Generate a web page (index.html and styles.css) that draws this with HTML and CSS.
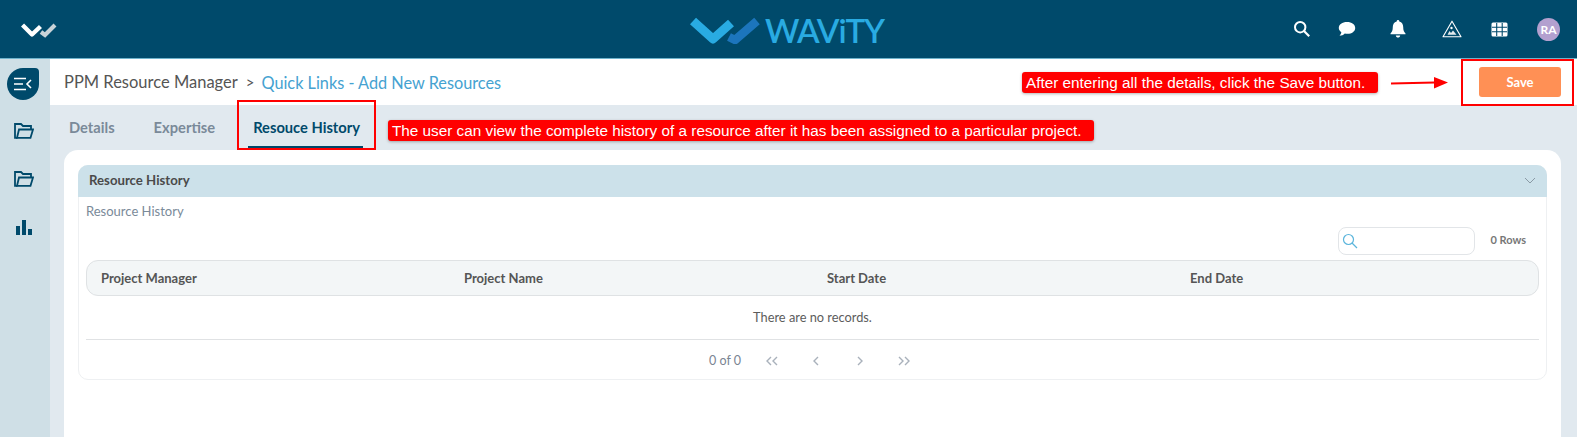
FILE: index.html
```html
<!DOCTYPE html>
<html lang="en">

<head>
  <meta charset="UTF-8">
  <meta name="viewport" content="width=device-width, initial-scale=1.0">
  <title>PPM Resource Manager</title>
  <link rel="stylesheet" href="styles.css">
</head>

<body>
  <div class="topbar">
    <svg class="mini-logo" width="36" height="16" viewBox="0 0 36 16">
      <path d="M1.5 3 L11 12.5 L19.5 4.5" fill="none" stroke="#fff" stroke-width="4.4" stroke-linejoin="round" />
      <path d="M20 10 L24 13 L34 3" fill="none" stroke="#c9d3d8" stroke-width="4.2" />
    </svg>
    <div class="brand">
      <svg width="70" height="28" viewBox="0 0 70 28">
        <path d="M3 5 L23 23 L41 7" fill="none" stroke="#29abe2" stroke-width="9" stroke-linejoin="round" />
        <path d="M39 21 L45 24 L67 5" fill="none" stroke="#1c75bc" stroke-width="8.5" stroke-linejoin="round" />
      </svg>
      <span class="brand-name">WAViTY</span>
    </div>
    <div class="top-icons">
      <svg class="ic-search" width="18" height="18" viewBox="0 0 18 18">
        <circle cx="7.2" cy="7.2" r="5.2" fill="none" stroke="#fff" stroke-width="2" />
        <path d="M11 11 L16.2 16.2" stroke="#fff" stroke-width="2.2" />
      </svg>
      <svg class="ic-comment" width="18" height="16" viewBox="0 0 18 16">
        <path d="M9 1 C13.8 1 17.2 3.5 17.2 7 C17.2 10.5 13.8 12.8 9.5 12.8 C8.5 12.8 7.6 12.7 6.8 12.5 C5.5 13.8 3.5 14.8 1.5 14.8 C2.5 13.8 3.2 12.4 3.3 11.2 C1.7 10 .8 8.6 .8 7 C.8 3.5 4.2 1 9 1 Z" fill="#fff" />
      </svg>
      <svg class="ic-bell" width="16" height="18" viewBox="0 0 16 18">
        <path d="M8 0 C8.8 0 9.3 .6 9.3 1.4 C12 2 13.2 4.2 13.2 7 C13.2 10.5 14 12 15.5 13.4 L15.5 14.2 L.5 14.2 L.5 13.4 C2 12 2.8 10.5 2.8 7 C2.8 4.2 4 2 6.7 1.4 C6.7 .6 7.2 0 8 0 Z" fill="#fff" />
        <path d="M5.8 15.4 L10.2 15.4 C10 16.8 9.1 17.6 8 17.6 C6.9 17.6 6 16.8 5.8 15.4 Z" fill="#fff" />
      </svg>
      <svg class="ic-warn" width="20" height="18" viewBox="0 0 20 18">
        <path d="M10 1.2 L19 16.8 L1 16.8 Z" fill="none" stroke="#fff" stroke-width="1.1" stroke-linejoin="round" />
        <path d="M5.5 14.8 L7.5 11 L9 13 L11 10.5 L14.5 14.8 Z" fill="#e4ebee" />
        <circle cx="9.5" cy="8" r="1.2" fill="#fff" />
      </svg>
      <svg class="ic-grid" width="17" height="15" viewBox="0 0 17 15">
        <rect x=".5" y=".5" width="16" height="14" rx="1.5" fill="#fff" />
        <path d="M5.7 1 V14 M11.2 1 V14 M1 5.2 H16 M1 9.8 H16" stroke="#004a6b" stroke-width="1.1" />
      </svg>
      <span class="avatar">RA</span>
    </div>
  </div>

  <div class="layout">
    <div class="sidebar">
      <div class="toggle">
        <svg width="18" height="14" viewBox="0 0 18 14">
          <path d="M0 1.5 H12 M0 7 H9 M0 12.5 H12" stroke="#fff" stroke-width="1.6" />
          <path d="M17 3 L13 7 L17 11" fill="none" stroke="#fff" stroke-width="1.6" />
        </svg>
      </div>
      <svg class="side-ic" width="20" height="16" viewBox="0 0 20 16">
        <path d="M3.5 14.8 H1 V1 H7 L9 3 H17 V6" fill="none" stroke="#004a6b" stroke-width="1.8" />
        <path d="M5 6.5 H19 L16.5 14.8 H3 Z" fill="none" stroke="#004a6b" stroke-width="1.8" />
      </svg>
      <svg class="side-ic" width="20" height="16" viewBox="0 0 20 16">
        <path d="M3.5 14.8 H1 V1 H7 L9 3 H17 V6" fill="none" stroke="#004a6b" stroke-width="1.8" />
        <path d="M5 6.5 H19 L16.5 14.8 H3 Z" fill="none" stroke="#004a6b" stroke-width="1.8" />
      </svg>
      <svg class="side-ic ic-bars" width="16" height="15" viewBox="0 0 16 15">
        <rect x="0" y="6" width="4" height="9" fill="#004a6b" />
        <rect x="6" y="0" width="4" height="15" fill="#004a6b" />
        <rect x="12" y="9" width="4" height="6" fill="#004a6b" />
      </svg>
    </div>

    <div class="main">
      <div class="subheader">
        <span class="crumb">PPM Resource Manager</span>
        <span class="crumb-sep">&gt;</span>
        <span class="crumb-link">Quick Links - Add New Resources</span>
        <button class="save-btn">Save</button>
      </div>

      <div class="tabs">
        <span class="tab">Details</span>
        <span class="tab">Expertise</span>
        <span class="tab active">Resouce History</span>
      </div>

      <div class="card">
        <div class="section">
          <div class="section-head">
            <span>Resource History</span>
            <svg width="12" height="7" viewBox="0 0 12 7">
              <path d="M1 1 L6 6 L11 1" fill="none" stroke="#8a9aa5" stroke-width="1" />
            </svg>
          </div>
          <div class="section-body">
            <div class="section-label">Resource History</div>
            <div class="table-tools">
              <div class="search">
                <svg width="16" height="16" viewBox="0 0 16 16">
                  <circle cx="6.5" cy="6.5" r="5" fill="none" stroke="#5bb5dc" stroke-width="1.2" />
                  <path d="M10 10 L15 15" stroke="#5bb5dc" stroke-width="1.3" />
                </svg>
              </div>
              <span class="rows">0 Rows</span>
            </div>
            <div class="table-head">
              <span>Project Manager</span>
              <span>Project Name</span>
              <span>Start Date</span>
              <span>End Date</span>
            </div>
            <div class="no-records">There are no records.</div>
            <div class="pager">
              <span class="pager-count">0 of 0</span>
              <svg width="14" height="10" viewBox="0 0 14 10">
                <path d="M6 1 L2 5 L6 9 M12 1 L8 5 L12 9" fill="none" stroke="#a9b1bb" stroke-width="1.4" />
              </svg>
              <svg width="14" height="10" viewBox="0 0 14 10">
                <path d="M9 1 L5 5 L9 9" fill="none" stroke="#a9b1bb" stroke-width="1.4" />
              </svg>
              <svg width="14" height="10" viewBox="0 0 14 10">
                <path d="M5 1 L9 5 L5 9" fill="none" stroke="#a9b1bb" stroke-width="1.4" />
              </svg>
              <svg width="14" height="10" viewBox="0 0 14 10">
                <path d="M2 1 L6 5 L2 9 M8 1 L12 5 L8 9" fill="none" stroke="#a9b1bb" stroke-width="1.4" />
              </svg>
            </div>
          </div>
        </div>
      </div>
    </div>
  </div>

  <!-- annotations drawn over the screen -->
  <div class="mark mark-tab"></div>
  <div class="mark mark-save"></div>
  <div class="note note-tab">The user can view the complete history of a resource after it has been assigned to a particular project.</div>
  <div class="note note-save">After entering all the details, click the Save button.</div>
  <svg class="note-arrow" width="58" height="14" viewBox="0 0 58 14">
    <path d="M0 7.6 L44 6.6" stroke="#f00" stroke-width="2" />
    <path d="M43 1 L57 6.5 L43 12.5 Z" fill="#f00" />
  </svg>
</body>

</html>
```

FILE: styles.css
```css
html,
body {
  height: 100%;
}

body {
  font-family: 'Lato', sans-serif;
  margin: 0;
  padding: 0;
  overflow: hidden;
  background-color: #e1e9ef;
  color: #4a4a4a;
}

.topbar {
  position: relative;
  display: flex;
  align-items: center;
  justify-content: space-between;
  box-sizing: border-box;
  height: 59px;
  padding: 0 17px 0 21px;
  background: #004a6b;
  border-bottom: 1px solid #6fb3cc;
}

.mini-logo {
  margin-top: 1px;
}

.brand {
  position: absolute;
  left: 690px;
  top: 15px;
  display: flex;
  align-items: center;
  gap: 5px;
}

.brand-name {
  font-size: 33px;
  font-weight: 600;
  letter-spacing: -1px;
  line-height: 30px;
  color: #29abe2;
}

.top-icons {
  display: flex;
  align-items: center;
}

.ic-search {
  margin-right: 27px;
}

.ic-comment {
  margin-right: 34px;
}

.ic-bell {
  margin-right: 36px;
}

.ic-warn {
  margin-right: 29px;
}

.ic-grid {
  margin-right: 29px;
}

.avatar {
  display: flex;
  align-items: center;
  justify-content: center;
  width: 23px;
  height: 23px;
  border-radius: 50%;
  background: #b3a0cf;
  color: #fff;
  font-size: 12px;
  font-weight: 700;
}

.layout {
  display: flex;
  height: calc(100% - 59px);
}

.sidebar {
  display: flex;
  flex-direction: column;
  align-items: center;
  flex: none;
  width: 50px;
  padding-top: 9px;
  box-sizing: border-box;
  background: #cfdfe6;
}

.toggle {
  display: flex;
  align-items: center;
  justify-content: center;
  width: 32px;
  height: 32px;
  margin-right: 4px;
  margin-bottom: 23px;
  background: #004a6b;
  border-radius: 50% 4px 50% 50%;
}

.side-ic {
  margin-bottom: 32px;
  margin-right: 2px;
}

.ic-bars {
  margin-top: 1px;
}

.main {
  flex: 1;
  min-width: 0;
}

.subheader {
  display: flex;
  align-items: center;
  box-sizing: border-box;
  height: 46px;
  padding: 0 16px 0 14px;
  background: #fff;
}

.crumb {
  font-size: 16.5px;
  color: #555;
}

.crumb-sep {
  margin: 0 7px 0 8px;
  font-size: 15px;
  color: #555;
}

.crumb-link {
  font-size: 16.3px;
  color: #45a2d1;
}

.save-btn {
  margin-left: auto;
  width: 82px;
  height: 30px;
  border: 0;
  border-radius: 3px;
  background: #ff9055;
  color: #fff;
  font-family: 'Lato', sans-serif;
  font-size: 13px;
  font-weight: 700;
}

.tabs {
  display: flex;
  height: 45px;
  box-sizing: border-box;
  padding-left: 19px;
}

.tab {
  font-size: 14.7px;
  font-weight: 700;
  color: #7a8a99;
  line-height: 45px;
  margin-right: 39px;
}

.tab.active {
  box-sizing: border-box;
  margin-left: -6px;
  padding: 0 3px 0 5px;
  height: 43px;
  color: #00496b;
  border-bottom: 2px solid #00496b;
}

.card {
  box-sizing: border-box;
  height: 300px;
  margin: 0 16px 0 14px;
  padding: 15px 14px;
  background: #fff;
  border-radius: 14px 14px 0 0;
}

.section {
  border: 1px solid #eef0f2;
  border-radius: 10px;
}

.section-head {
  display: flex;
  align-items: center;
  justify-content: space-between;
  box-sizing: border-box;
  height: 32px;
  padding: 0 11px 2px;
  margin: -1px -1px 0;
  background: #cce1ea;
  border-radius: 10px 10px 0 0;
  font-size: 13.2px;
  font-weight: 700;
  color: #4a4a4a;
}

.section-body {
  padding: 0 7px;
}

.section-label {
  font-size: 13px;
  color: #7a8a99;
  line-height: 29px;
}

.table-tools {
  display: flex;
  align-items: center;
  justify-content: flex-end;
  height: 28px;
  margin-top: 1px;
}

.search {
  display: flex;
  align-items: center;
  box-sizing: border-box;
  width: 137px;
  height: 28px;
  padding-left: 3px;
  border: 1px solid #e2e5e8;
  border-radius: 8px;
}

.rows {
  margin: 0 13px 3px 15px;
  font-size: 11px;
  font-weight: 700;
  color: #777;
}

.table-head {
  display: grid;
  grid-template-columns: repeat(4, 363px);
  align-items: center;
  box-sizing: border-box;
  height: 36px;
  margin-top: 5px;
  padding-left: 14px;
  background: #f3f6f7;
  border: 1px solid #dfe2e4;
  border-radius: 12px;
  font-size: 13px;
  font-weight: 700;
  color: #555;
}

.no-records {
  height: 43px;
  line-height: 42px;
  border-bottom: 1px solid #e0e2e4;
  text-align: center;
  font-size: 12.8px;
  color: #5c5c5c;
}

.pager {
  display: flex;
  align-items: center;
  height: 39px;
  padding-left: 623px;
  padding-top: 2px;
  box-sizing: border-box;
  color: #7a8492;
  font-size: 12.5px;
}

.pager-count {
  width: 56px;
}

.pager svg {
  margin-right: 30px;
}

/* red callouts from the screenshot */
.mark {
  position: absolute;
  box-sizing: border-box;
  border: 2px solid #f00;
}

.mark-tab {
  left: 237px;
  top: 100px;
  width: 139px;
  height: 50px;
}

.mark-save {
  left: 1461px;
  top: 59px;
  width: 113px;
  height: 47px;
}

.note {
  position: absolute;
  box-sizing: border-box;
  height: 21px;
  padding-left: 4px;
  background: #f00;
  border-radius: 3px;
  box-shadow: 0 1px 3px rgba(0, 0, 0, 0.3);
  color: #fff;
  font-family: 'Liberation Sans', sans-serif;
  font-size: 15.3px;
  line-height: 21px;
  white-space: nowrap;
}

.note-tab {
  left: 388px;
  top: 120px;
  width: 706px;
}

.note-save {
  left: 1022px;
  top: 72px;
  width: 356px;
}

.note-arrow {
  position: absolute;
  left: 1391px;
  top: 76px;
}
```
